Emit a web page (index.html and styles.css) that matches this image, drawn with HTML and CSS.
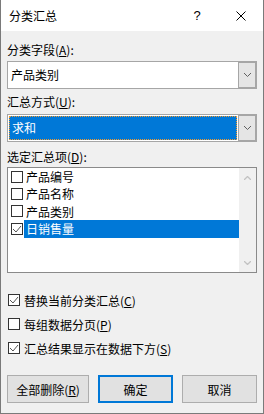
FILE: index.html
```html
<!DOCTYPE html>
<html lang="zh-CN">
<head>
<meta charset="utf-8">
<title>分类汇总</title>
<link rel="stylesheet" href="styles.css">
</head>
<body>
<div class="dialog">
  <div class="titlebar">
    <span class="title">分类汇总</span>
    <span class="help">?</span>
    <span class="close"><svg width="10" height="10" viewBox="0 0 10 10"><path d="M0.5 0.5 L9.5 9.5 M9.5 0.5 L0.5 9.5" stroke="#000" stroke-width="1" fill="none"/></svg></span>
  </div>
  <div class="content">
    <div class="label l1">分类字段(<u>A</u>):</div>
    <div class="combo">
      <div class="combo-text">产品类别</div>
      <div class="combo-btn"><svg width="7" height="4" viewBox="0 0 7 4"><polyline points="0,0 3.5,3.5 7,0" stroke="#606060" fill="none" stroke-width="1"/></svg></div>
    </div>
    <div class="label l2">汇总方式(<u>U</u>):</div>
    <div class="combo">
      <div class="combo-text focused"><span class="sel">求和</span></div>
      <div class="combo-btn"><svg width="7" height="4" viewBox="0 0 7 4"><polyline points="0,0 3.5,3.5 7,0" stroke="#606060" fill="none" stroke-width="1"/></svg></div>
    </div>
    <div class="label l3">选定汇总项(<u>D</u>):</div>
    <div class="listbox">
      <div class="items">
        <div class="item"><span class="cb"></span><span class="itext">产品编号</span></div>
        <div class="item"><span class="cb"></span><span class="itext">产品名称</span></div>
        <div class="item"><span class="cb"></span><span class="itext">产品类别</span></div>
        <div class="item"><span class="cb checked"><svg width="10" height="10" viewBox="0 0 10 10"><polyline points="1,5 4,8 9,2" stroke="#555" fill="none" stroke-width="1"/></svg></span><span class="itext selected">日销售量</span></div>
      </div>
      <div class="scrollbar">
        <svg width="7" height="4" viewBox="0 0 7 4"><polyline points="0,4 3.5,0.5 7,4" stroke="#c2c2c2" fill="none" stroke-width="1.3"/></svg>
        <svg width="7" height="4" viewBox="0 0 7 4"><polyline points="0,0 3.5,3.5 7,0" stroke="#c2c2c2" fill="none" stroke-width="1.3"/></svg>
      </div>
    </div>
    <div class="options">
      <div class="opt"><span class="cb checked"><svg width="10" height="10" viewBox="0 0 10 10"><polyline points="1,5 4,8 9,2" stroke="#555" fill="none" stroke-width="1"/></svg></span><span>替换当前分类汇总(<u>C</u>)</span></div>
      <div class="opt"><span class="cb"></span><span>每组数据分页(<u>P</u>)</span></div>
      <div class="opt"><span class="cb checked"><svg width="10" height="10" viewBox="0 0 10 10"><polyline points="1,5 4,8 9,2" stroke="#555" fill="none" stroke-width="1"/></svg></span><span>汇总结果显示在数据下方(<u>S</u>)</span></div>
    </div>
    <div class="buttons">
      <div class="btn wide">全部删除(<u>R</u>)</div>
      <div class="btn default">确定</div>
      <div class="btn">取消</div>
    </div>
  </div>
</div>
</body>
</html>
```
FILE: styles.css
```css
* { box-sizing: border-box; }
html, body { margin: 0; padding: 0; }
body {
  width: 264px;
  height: 414px;
  font-family: "Noto Sans CJK SC", "Noto Sans", sans-serif;
  font-size: 12px;
  color: #000;
  background: #f0f0f0;
}
u { text-decoration-thickness: 1px; text-underline-offset: 1px; }
.dialog {
  width: 264px;
  height: 414px;
  background: #f0f0f0;
  border-left: 1px solid #7a7a7a;
  border-right: 1px solid #7a7a7a;
  border-bottom: 1px solid #7a7a7a;
}
.titlebar {
  height: 31px;
  background: #fff;
  display: flex;
  align-items: center;
  padding-left: 8px;
}
.title { flex: 1; line-height: 16px; }
.help { width: 12px; text-align: center; line-height: 16px; margin-right: 33px; font-family: "Liberation Sans", sans-serif; font-size: 13px; }
.close { width: 10px; height: 10px; margin-right: 17px; display: flex; }
.content { padding: 0 6px; }
.label { line-height: 16px; height: 16px; }
.l1 { margin-top: 11px; margin-bottom: 3px; }
.l2 { margin-top: 5px; margin-bottom: 4px; }
.l3 { margin-top: 7px; margin-bottom: 2px; }
.combo {
  height: 28px;
  border: 1px solid #a6a6a6;
  background: #fff;
  display: flex;
}
.combo-text {
  flex: 1;
  line-height: 26px;
  padding-left: 3px;
}
.combo-text.focused {
  padding: 1px;
  display: flex;
}
.sel {
  flex: 1;
  background: #0078d7;
  color: #fff;
  border: 1px dotted #f39a2f;
  line-height: 22px;
  padding-left: 2px;
}
.combo-btn {
  width: 18px;
  background: #e5e5e5;
  border-left: 1px solid #a6a6a6;
  box-shadow: inset -1px 0 0 #a6a6a6, inset 0 1px 0 #a6a6a6, inset 0 -1px 0 #a6a6a6;
  display: flex;
  align-items: center;
  justify-content: center;
  padding-right: 1px;
}
.listbox {
  height: 106px;
  border: 1px solid #8a8a8a;
  background: #fff;
  display: flex;
}
.items { flex: 1; }
.item {
  height: 17.4px;
  display: flex;
  align-items: center;
  padding-left: 3px;
}
.cb {
  width: 12px;
  height: 12px;
  border: 1px solid #333;
  background: #fff;
  display: flex;
  align-items: center;
  justify-content: center;
  flex: none;
}
.itext {
  margin-left: 1px;
  padding-left: 2px;
  line-height: 17.4px;
}
.itext.selected {
  flex: 1;
  background: #0078d7;
  color: #fff;
}
.scrollbar {
  width: 17px;
  background: #f0f0f0;
  display: flex;
  flex-direction: column;
  align-items: center;
  justify-content: space-between;
  padding: 8px 0 7px;
}
.options { margin-top: 15px; }
.opt {
  height: 24px;
  display: flex;
  align-items: center;
  padding-left: 1px;
}
.opt .cb { margin-right: 4px; }
.buttons {
  margin-top: 15px;
  display: flex;
  gap: 9px;
}
.btn {
  width: 75px;
  height: 28px;
  background: #e1e1e1;
  border: 1px solid #adadad;
  display: flex;
  align-items: center;
  justify-content: center;
}
.btn.wide { width: 82px; }
.btn.default { border: 2px solid #0078d7; }
```
